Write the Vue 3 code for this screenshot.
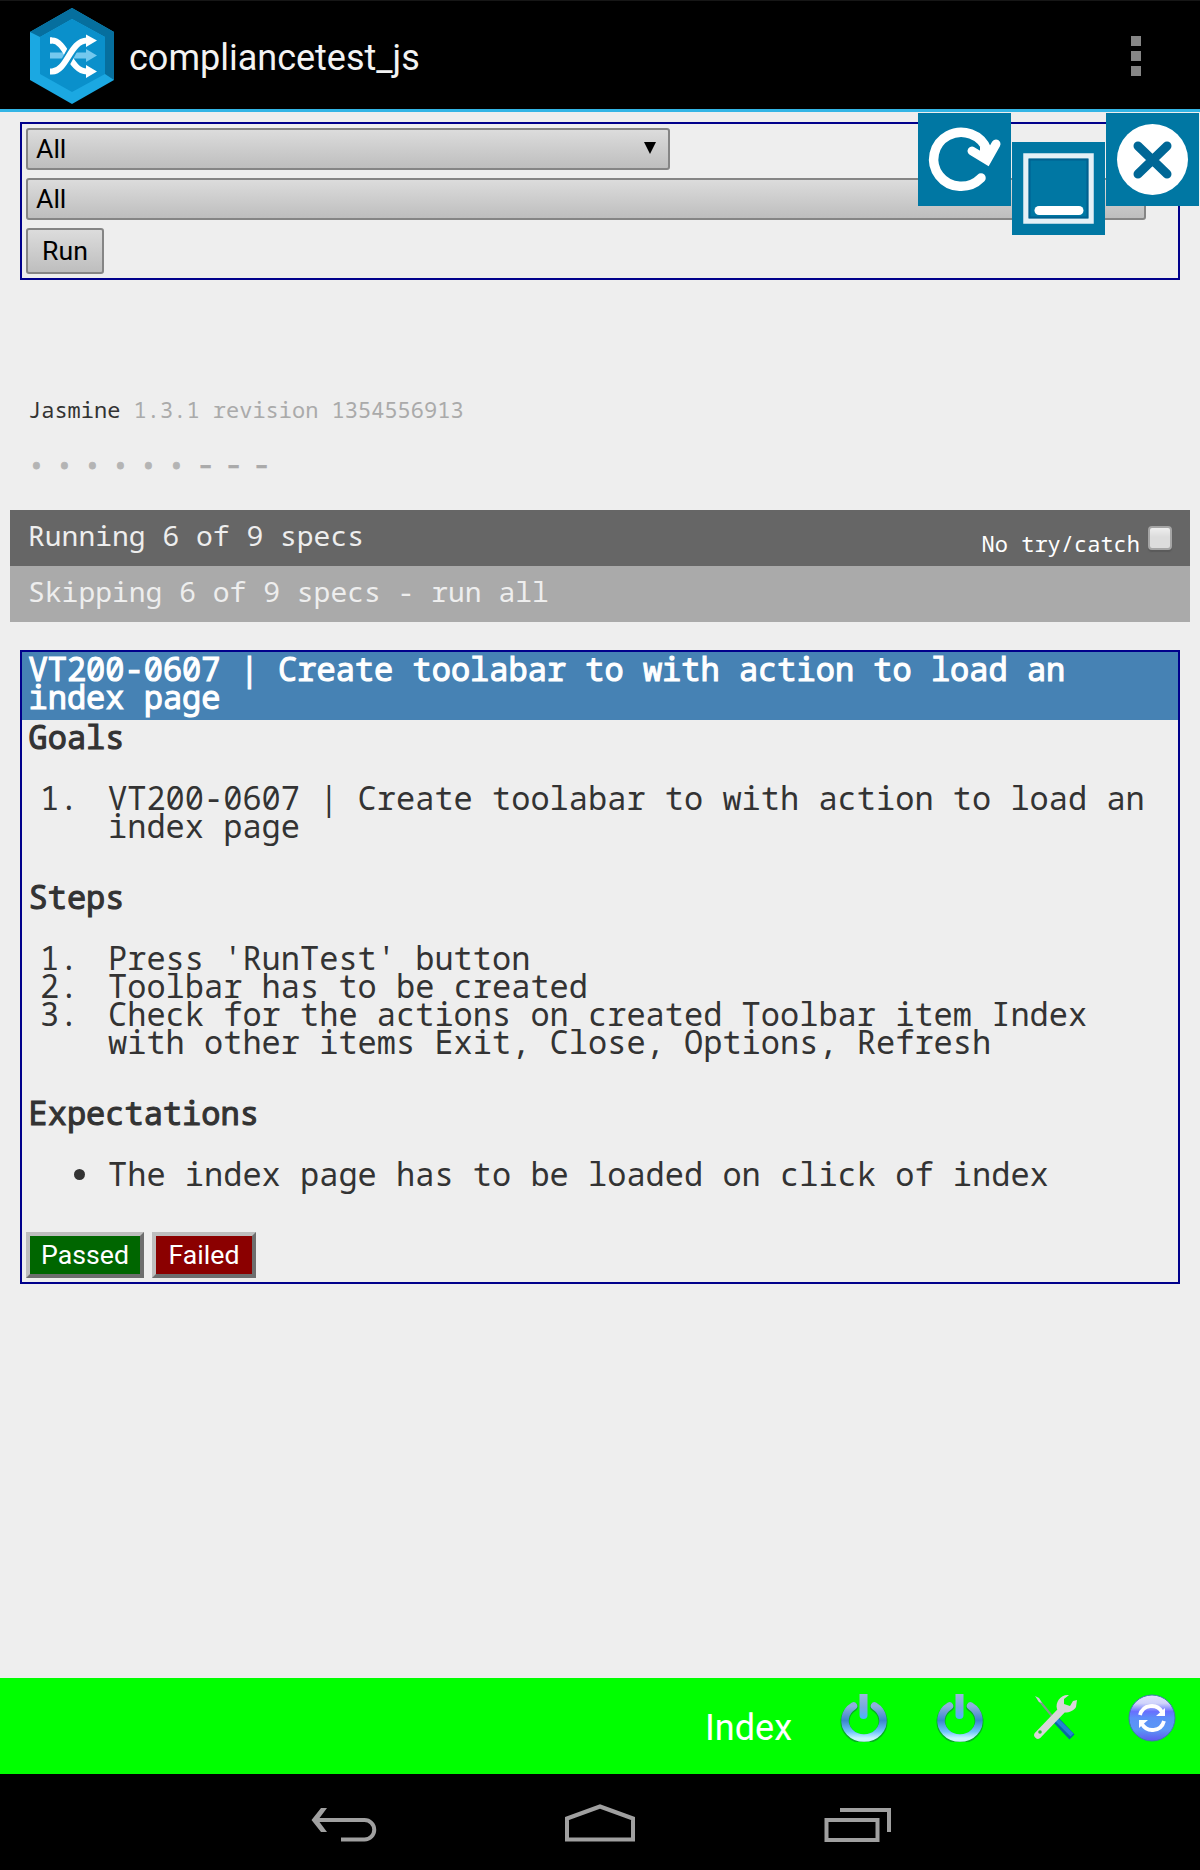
<script setup>
const statuses = ['•', '•', '•', '•', '•', '•', '-', '-', '-']
const title = 'VT200-0607 | Create toolabar to with action to load an index page'
const sections = [
  { name: 'Goals', ordered: true, items: [title] },
  {
    name: 'Steps',
    ordered: true,
    items: [
      "Press 'RunTest' button",
      'Toolbar has to be created',
      'Check for the actions on created Toolbar item Index with other items Exit, Close, Options, Refresh',
    ],
  },
  { name: 'Expectations', ordered: false, items: ['The index page has to be loaded on click of index'] },
]
</script>

<template>
  <div class="screen">
    <header class="action-bar">
      <svg class="logo" width="84" height="96" viewBox="0 0 84 96">
        <path d="M42 0 84 24v48L42 96 0 72V24z" fill="#1ba8e2" />
        <path d="M0 24 42 0l42 24v48l-9-6V29L42 11 10 29z" fill="#066f9e" />
        <path d="M42 11 75 29v37L42 84 10 66V29z" fill="#0a90cb" />
        <g fill="none" stroke-width="6">
          <path d="M20 47.500h37" stroke="#74c8ee" />
          <path d="M56 41 67 47.500 56 54z" fill="#74c8ee" />
          <path d="M20 32.500h2c14 0 18 31 35 31" stroke="#fff" />
          <path d="M24 63.500c14 0 16-31 30-31" stroke="#0a90cb" stroke-width="10" />
          <path d="M20 63.500h2c15 0 18-31 35-31M20 32.500h2" stroke="#fff" />
          <path d="M56 26.500 67 32.500 56 39zM56 57 67 63.500 56 70z" fill="#fff" />
        </g>
      </svg>
      <span class="app-name">compliancetest_js</span>
      <div class="overflow"><i></i><i></i><i></i></div>
    </header>

    <main class="page">
      <section class="filters">
        <div class="select short"><span>All</span><svg width="12" height="12" viewBox="0 0 12 12"><path d="M0 0h12L6 12z" /></svg></div>
        <div class="select long"><span>All</span></div>
        <button class="run">Run</button>
      </section>

      <div class="banner"><span class="name">Jasmine</span> 1.3.1 revision 1354556913</div>
      <div class="symbols"><span v-for="(s, i) in statuses" :key="i" :class="{ dash: s === '-' }">{{ s }}</span></div>

      <div class="bar running">
        <span>Running 6 of 9 specs</span>
        <label class="catch">No try/catch<i class="check"></i></label>
      </div>
      <div class="bar skipping">Skipping 6 of 9 specs - run all</div>

      <section class="card">
        <h1>{{ title }}</h1>
        <template v-for="s in sections" :key="s.name">
          <h2>{{ s.name }}</h2>
          <div class="list">
            <div v-for="(t, i) in s.items" :key="i" class="item">
              <span class="marker" :class="{ disc: !s.ordered }">{{ s.ordered ? i + 1 + '.' : '' }}</span>
              <span>{{ t }}</span>
            </div>
          </div>
        </template>
        <div class="verdict">
          <button class="passed">Passed</button>
          <button class="failed">Failed</button>
        </div>
      </section>
    </main>

    <svg class="float refresh" viewBox="0 0 93 93">
      <path d="M63 65A27.500 27 0 1 1 69 37" fill="none" stroke="#fff" stroke-width="9.500" stroke-linecap="round" />
      <path d="M54 38 69 47 78 31" fill="none" stroke="#fff" stroke-width="9" stroke-linecap="round" />
      <path d="M62 34 73 34 71 46 62 41z" fill="#fff" />
    </svg>
    <svg class="float minimize" viewBox="0 0 93 93">
      <rect x="14" y="14" width="65" height="65" fill="none" stroke="#e4f0f6" stroke-width="5.500" />
      <rect x="17.500" y="17.500" width="58" height="58" fill="none" stroke="#00608f" stroke-width="2" />
      <path d="M27 68.500h40" stroke="#fff" stroke-width="9" stroke-linecap="round" />
    </svg>
    <svg class="float close" viewBox="0 0 93 93">
      <circle cx="46.500" cy="46.500" r="35.500" fill="#fff" />
      <path d="m32 33 29 28M61 33 32 61" stroke="#006796" stroke-width="9" stroke-linecap="round" />
    </svg>

    <footer class="toolbar">
      <span class="index">Index</span>
      <svg v-for="n in 2" :key="n" width="48" height="48" viewBox="0 0 48 48">
        <defs>
          <linearGradient :id="'ring' + n" x1="0" y1="0" x2="0" y2="1">
            <stop offset="0" stop-color="#8fb0dc" /><stop offset=".45" stop-color="#3c84cd" />
            <stop offset=".8" stop-color="#6fc4fa" /><stop offset="1" stop-color="#c9f4ff" />
          </linearGradient>
          <linearGradient :id="'stem' + n" x1="0" y1="0" x2="0" y2="1">
            <stop offset="0" stop-color="#a3bcdc" /><stop offset=".6" stop-color="#78a8e0" /><stop offset="1" stop-color="#4bb4fa" />
          </linearGradient>
        </defs>
        <path d="M13.500 13A19 17.500 0 1 0 34.500 13" fill="none" stroke="#087a35" stroke-width="9" stroke-linecap="round" opacity=".6" />
        <path d="M13.500 12A19 17.500 0 1 0 34.500 12" fill="none" :stroke="'url(#ring' + n + ')'" stroke-width="7.500" stroke-linecap="round" />
        <rect x="19.500" y="-4" width="8" height="29" rx="4" :fill="'url(#stem' + n + ')'" />
      </svg>
      <svg width="48" height="48" viewBox="0 0 48 48">
        <path d="M6 5 24 27" stroke="#7f9a8c" stroke-width="2" />
        <path d="m3 2 4 2 3 5-3-1z" fill="#ccd" />
        <path d="m24 26 16 17" stroke="#0868a0" stroke-width="7" />
        <path d="m24 25 16 16" stroke="#2383d2" stroke-width="4" />
        <path d="M6 41 29 17" stroke="#d9d5d9" stroke-width="7.500" stroke-linecap="round" />
        <path d="M37 1c-8-1-14 7-12 14 4 6 16 4 19-2l1-7-4 1-3 5-6-2 0-5z" fill="#d9d5d9" />
        <circle cx="8" cy="38" r="1.800" fill="#20c92a" />
      </svg>
      <svg width="48" height="48" viewBox="0 0 48 48">
        <defs>
          <linearGradient id="orb" x1="0" y1="0" x2="0" y2="1">
            <stop offset="0" stop-color="#e0e2ff" /><stop offset=".18" stop-color="#d0d4fb" /><stop offset=".36" stop-color="#686fff" />
            <stop offset=".5" stop-color="#5c8ff8" /><stop offset=".75" stop-color="#5b97f5" /><stop offset="1" stop-color="#5f58f0" />
          </linearGradient>
        </defs>
        <circle cx="24" cy="24" r="23" fill="url(#orb)" stroke="#3e78ad" />
        <g fill="none" stroke="#fff" stroke-width="3.800">
          <path d="M12 21a12 12 0 0 1 22-3M36 27a12 12 0 0 1-22 3" />
          <path d="M37 14v8h-9zM11 34v-8h9z" fill="#fff" stroke="none" />
        </g>
      </svg>
    </footer>

    <nav class="nav">
      <svg viewBox="216 1774 256 96"><path d="M314 1820h50.500a9.700 9.700 0 0 1 0 19.500H341" /><path d="M327 1808h-6L311.500 1820l9.500 12h6L318 1820z" class="solid" /></svg>
      <svg viewBox="472 1774 256 96"><path d="M567 1839.500v-21L600 1806.500 633 1818.500v21z" /></svg>
      <svg viewBox="728 1774 256 96"><path d="M826.500 1820h51v20h-51zM840 1810h49v22" /></svg>
    </nav>
  </div>
</template>

<style>
body { margin: 0; background: #eee; }
</style>

<style scoped>
.screen { position: relative; width: 1200px; height: 1870px; display: flex; flex-direction: column; background: #eee; overflow: hidden; font-family: Roboto, sans-serif; }
.action-bar { box-sizing: border-box; height: 112px; flex: none; display: flex; align-items: flex-start; background: #000; border-top: 1px solid #161616; border-bottom: 3px solid #33b5e5; padding: 7px 59px 0 30px; }
.app-name { margin: 29px 0 0 15px; font-size: 36px; line-height: 42px; color: #f3f3f3; white-space: nowrap; }
.overflow { margin: 28px 0 0 auto; display: flex; flex-direction: column; gap: 5px; }
.overflow i { width: 10px; height: 10px; background: #868686; }
.page { flex: 1; padding: 10px 10px 0; color: #333; font-family: "Noto Sans Mono", "DejaVu Sans Mono", monospace; }
.filters { box-sizing: border-box; height: 158px; margin: 0 10px; border: 2px solid #00008b; padding: 4px; display: flex; flex-direction: column; align-items: flex-start; gap: 8px; }
.select, .run { box-sizing: border-box; border: 2px solid #858585; border-radius: 3px; background: linear-gradient(#dcdcdc, #bebebe); font: 26.67px/38px Roboto, sans-serif; color: #000; }
.select { height: 42px; padding: 0 12px 0 8px; display: flex; justify-content: space-between; align-items: center; }
.select svg { margin-bottom: 2px; }
.short { width: 644px; }
.long { width: 1120px; }
.run { width: 78px; height: 46px; padding: 0; line-height: 42px; }
.banner { margin: 113px 18px 0; height: 32px; font-size: 22px; line-height: 32px; color: #aaa; }
.name { color: #333; }
.symbols { display: flex; height: 28px; margin: 27px 18px 0; font-size: 28px; line-height: 27px; color: #b4b4b4; }
.symbols span { width: 28px; -webkit-text-stroke: .8px #b4b4b4; }
.symbols .dash { color: #aaa; font-size: 32px; line-height: 23px; -webkit-text-stroke: .6px #aaa; }
.bar { box-sizing: border-box; height: 56px; padding: 0 18px; display: flex; justify-content: space-between; align-items: flex-start; font-size: 28px; line-height: 50px; color: #eee; }
.running { margin-top: 30px; background: #666; }
.skipping { background: #aaa; }
.catch { display: flex; font-size: 22px; line-height: 66px; height: 56px; color: #fff; }
.check { box-sizing: border-box; width: 24px; height: 24px; margin: 16px 0 0 8px; border: 2px solid #a5a5a5; border-radius: 4px; background: linear-gradient(#eee, #dcdcdc 45%); box-shadow: 0 2px 1px #5a5a5a; }
.card { box-sizing: border-box; height: 634px; margin: 28px 10px 0; border: 2px solid #00008b; font-size: 32px; line-height: 28px; }
h1, h2 { margin: 0; font-size: 32px; font-weight: 400; -webkit-text-stroke: 1.1px currentColor; }
h1 { box-sizing: border-box; height: 68px; padding: 3px 6.5px; background: #4682b4; color: #fff; }
h2 { padding: 3px 6.5px 0; height: 29px; }
.list { padding: 32px 20px 40px 0; }
.item { display: flex; }
.marker { width: 68px; padding-left: 18px; box-sizing: border-box; margin-right: 18px; flex: none; }
.disc { display: flex; align-items: center; padding-left: 52px; }
.disc::before { content: ""; width: 11px; height: 11px; border-radius: 50%; background: #333; }
.verdict { display: flex; gap: 8px; padding: 4px 4px 0; }
.verdict button { box-sizing: border-box; height: 46px; padding: 0; border: 4px solid; border-color: #bebebe #6e6e6e #6e6e6e #bebebe; font: 26.67px/38px Roboto, sans-serif; color: #fff; }
.passed { width: 118px; background: #060; }
.failed { width: 104px; background: #8b0000; }
.float { position: absolute; width: 93px; height: 93px; background: #0077a3; }
.refresh { left: 918px; top: 113px; }
.minimize { left: 1012px; top: 142px; }
.close { left: 1106px; top: 113px; }
.toolbar { box-sizing: border-box; height: 96px; flex: none; background: #0f0; display: flex; justify-content: flex-end; gap: 48px; padding: 16px 24px; }
.index { font-size: 36px; line-height: 42px; margin-top: 13px; color: #fff; }
.nav { height: 96px; flex: none; background: #000; display: flex; justify-content: center; }
.nav svg { width: 256px; height: 96px; fill: none; stroke: #a0a0a0; stroke-width: 4; }
.nav .solid { fill: #a0a0a0; stroke: none; }
</style>
